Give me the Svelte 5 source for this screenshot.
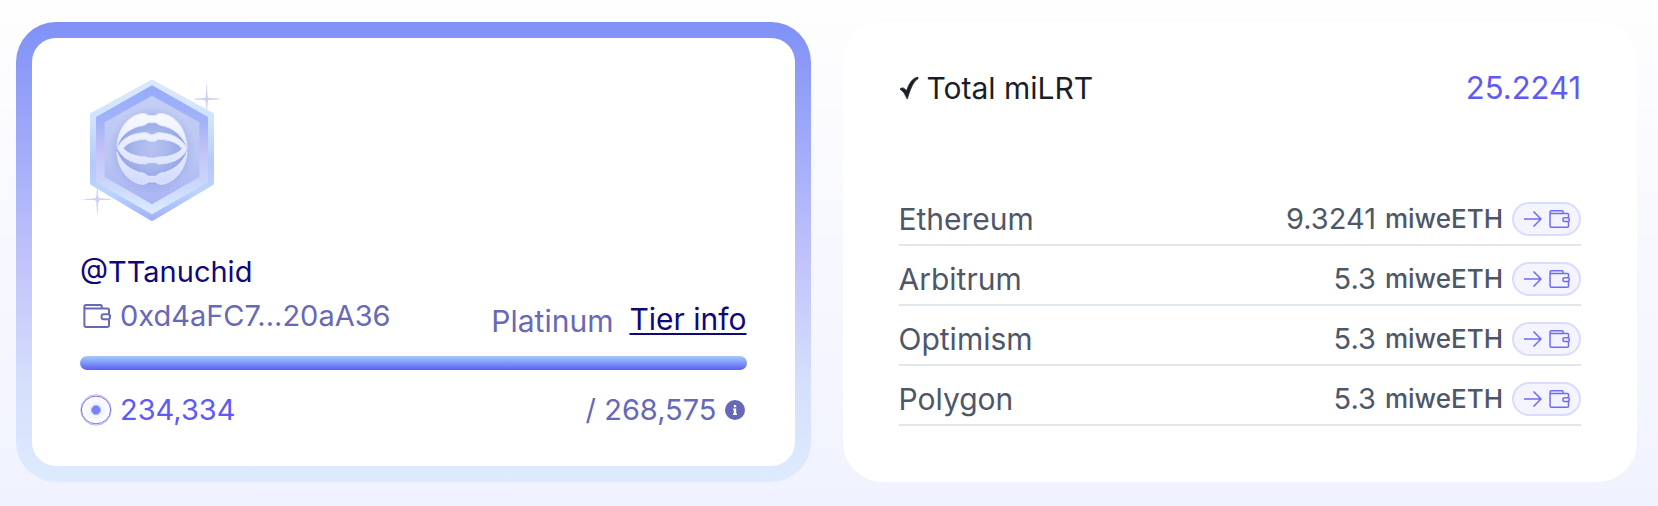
<script>
  const balances = [
    { chain: 'Ethereum', amount: '9.3241' },
    { chain: 'Arbitrum', amount: '5.3' },
    { chain: 'Optimism', amount: '5.3' },
    { chain: 'Polygon', amount: '5.3' }
  ];
</script>

{#snippet wallet(cls)}
  <svg class={cls} viewBox="0 0 28 24" fill="none" stroke="currentColor" stroke-width="2" aria-hidden="true">
    <path d="M26 10V6Q26 4.6 24.6 4.6H1.4M1.4 4.6V21Q1.4 23 3.2 23H24.6Q26 23 26 21.6V15.4" />
    <path d="M1.4 5V2.8Q1.4 1 3.2 1H17.4Q18.8 1 18.8 2.4V4.4" />
    <rect x="18.6" y="10.2" width="8.4" height="5" rx="2" />
  </svg>
{/snippet}

<main>
  <section class="tier">
    <div class="inner">
      <svg class="badge" viewBox="30 39 432 432" aria-hidden="true">
        <defs>
          <linearGradient id="rim" x1="0" y1="0" x2="0" y2="1">
            <stop offset="0" stop-color="#d9e8fd" /><stop offset=".3" stop-color="#cfe2fd" />
            <stop offset=".6" stop-color="#b3c8fb" /><stop offset=".8" stop-color="#bcd5fc" /><stop offset="1" stop-color="#a0b3f9" />
          </linearGradient>
          <linearGradient id="band" x1="0" y1="0" x2="0" y2="1">
            <stop offset="0" stop-color="#95abf9" /><stop offset=".28" stop-color="#a3b2f8" />
            <stop offset=".52" stop-color="#c4c3f8" /><stop offset=".78" stop-color="#cbd8fb" /><stop offset="1" stop-color="#dcecfd" />
          </linearGradient>
          <linearGradient id="core" x1="0" y1="0" x2="0" y2="1">
            <stop offset="0" stop-color="#c5cff5" /><stop offset=".6" stop-color="#b9c5f3" /><stop offset="1" stop-color="#a9b3f2" />
          </linearGradient>
          <linearGradient id="mark" gradientUnits="userSpaceOnUse" x1="0" y1="145" x2="0" y2="358">
            <stop offset="0" stop-color="#f8faff" /><stop offset=".5" stop-color="#e6ebfe" /><stop offset="1" stop-color="#d3dbfc" />
          </linearGradient>
          <radialGradient id="halo">
            <stop offset=".6" stop-color="#8b9be3" stop-opacity=".6" /><stop offset="1" stop-color="#8b9be3" stop-opacity="0" />
          </radialGradient>
          <radialGradient id="ball">
            <stop offset="0" stop-color="#b8c3f1" /><stop offset=".5" stop-color="#a9b6ec" /><stop offset="1" stop-color="#93a3e4" />
          </radialGradient>
        </defs>
        <g fill="#c7c7f7">
          <path d="M410 48Q411 90 414 98Q422 101 462 102Q422 103 414 106Q411 114 410 156Q409 114 406 106Q398 103 360 102Q398 101 406 98Q409 90 410 48Z" />
          <path d="M82 350Q83 391 86 399Q94 402 134 403Q94 404 86 407Q83 415 82 456Q81 415 78 407Q70 404 32 403Q70 402 78 399Q81 391 82 350Z" />
        </g>
        <g stroke="#d2d2f9" stroke-width="3" fill="none">
          <path d="M410 64V142M374 102H448M82 366V442M46 403H120" />
        </g>
        <path d="M246 52L424 150V354L246 460L68 354V150Z" fill="url(#rim)" stroke="url(#rim)" stroke-width="16" stroke-linejoin="round" />
        <path d="M246 61L414 156V352L246 448L78 352V156Z" fill="url(#band)" />
        <path d="M246 92L388 172V336L246 418L104 336V172Z" fill="url(#core)" />
        <circle cx="246" cy="255" r="132" fill="url(#halo)" />
        <circle cx="246" cy="252" r="104" fill="url(#ball)" />
        <g fill="url(#mark)" stroke="#e0e6fe" stroke-width="3" stroke-linejoin="round">
          <path d="M141 243C144 190 175 151 218 145Q229 145 235 151H257Q263 145 274 145C317 151 348 190 351 247C338 211 308 186 270 181L257 173H235L222 181C184 186 154 208 141 243Z" />
          <path fill-rule="evenodd" d="M142 248C157 220 183 205 225 203Q235 203 240 209H252Q257 203 267 203C309 205 337 222 351 252C338 280 309 295 267 297L253 292H239L225 297C183 295 155 278 142 248ZM160 250C170 264 194 275 227 276L238 279H254L265 276C302 276 325 265 336 251C325 235 302 224 265 223L254 229H238L227 223C192 224 170 235 160 250Z" />
          <path d="M141 260C153 294 184 320 222 325L235 334H257L270 325C308 320 338 295 351 260C348 311 317 352 274 358Q263 358 257 351H235Q229 358 218 358C175 352 144 313 141 260Z" />
        </g>
      </svg>

      <div class="profile">
        <div class="identity">
          <div class="handle">@TTanuchid</div>
          <div class="address">{@render wallet('wallet')}<span>0xd4aFC7...20aA36</span></div>
        </div>
        <div class="level">
          <span class="name">Platinum</span>
          <a href="#tier">Tier info</a>
        </div>
      </div>

      <div class="bar" role="progressbar" aria-label="Tier progress" aria-valuenow="234334" aria-valuemin="0" aria-valuemax="268575"></div>

      <div class="points">
        <div class="earned">
          <svg class="coin" viewBox="0 0 32 32" aria-hidden="true">
            <defs><radialGradient id="coinFill"><stop offset="0" stop-color="#e9eafe" /><stop offset="1" stop-color="#fff" /></radialGradient></defs>
            <circle cx="16" cy="16" r="15.2" fill="#fff" stroke="#b5b4fa" />
            <ellipse cx="16" cy="16" rx="14.6" ry="13.800" fill="url(#coinFill)" stroke="#7775f4" />
            <circle cx="16" cy="16" r="4.6" fill="#7d80f3" stroke="#91b8f8" />
          </svg>
          <span>234,334</span>
        </div>
        <div class="goal">
          <span>/ 268,575</span>
          <svg class="info" viewBox="0 0 20 20" aria-hidden="true">
            <circle cx="10" cy="10" r="10" fill="currentColor" />
            <path d="M8.800 5h2.400v2.200H8.800zM8 8.400h3.200v5.200h.8v1.400H8v-1.400h.8V9.800H8z" fill="#fff" />
          </svg>
        </div>
      </div>
    </div>
  </section>

  <section class="totals">
    <header>
      <h2>
        <svg class="check" viewBox="0 0 20 24" aria-hidden="true"><path d="M1 13Q4.500 10 7.400 15Q12 1.500 19 1.200V2.800Q13.500 5 8.200 23Q5 15 1 13Z" fill="currentColor" stroke="currentColor" stroke-width=".8" /></svg>
        <span>Total miLRT</span>
      </h2>
      <strong>25.2241</strong>
    </header>
    <ul>
      {#each balances as b}
        <li>
          <span class="chain">{b.chain}</span>
          <span class="amount">{b.amount}</span>
          <span class="unit">miweETH</span>
          <button type="button" aria-label="Send {b.chain} balance to wallet">
            <svg class="arrow" viewBox="0 0 18 16" fill="none" stroke="currentColor" stroke-width="1.500" aria-hidden="true"><path d="M0 8H17M9.500 .5L17 8L9.500 15.500" /></svg>
            {@render wallet('mini')}
          </button>
        </li>
      {/each}
    </ul>
  </section>
</main>

<style>
  :global(body) {
    margin: 0;
    min-height: 100vh;
    background: linear-gradient(#fefefe, #f0f2ff);
  }
  main {
    display: grid;
    grid-template-columns: 1fr 1fr;
    gap: 32px;
    padding: 22px 21px 25px 16px;
    font-family: Inter, 'Liberation Sans', sans-serif;
    font-size: 29px;
    line-height: 44px;
    color: #6868b8;
  }
  svg { display: block; flex: none; }
  .tier {
    padding: 16px;
    border-radius: 40px;
    background: linear-gradient(#7f91f7, #c3c5fa 54%, #d5e1fc 80%, #deeafd);
  }
  .inner {
    padding: 40px 48px 34px;
    border-radius: 24px;
    background: #fff;
  }
  .badge { width: 144px; height: 144px; }
  .profile {
    display: flex;
    justify-content: space-between;
    align-items: flex-end;
    margin-top: 28px;
  }
  .identity { padding-bottom: 3px; }
  .handle { color: #10087a; }
  .address, .earned, .goal, .level { display: flex; align-items: center; gap: 8px; }
  .wallet { width: 28px; height: 24px; margin: 0 1px 0 3px; }
  .level { gap: 16px; align-items: flex-end; font-size: 30px; }
  .level .name { line-height: 40px; }
  a {
    color: #10087a;
    text-decoration: underline;
    text-decoration-thickness: 2px;
    text-underline-offset: 3px;
  }
  .bar {
    height: 14px;
    margin: 15px 0 18px;
    border-radius: 7px;
    background: linear-gradient(#a3cdfb, #5b5ef0);
  }
  .points { display: flex; justify-content: space-between; }
  .earned { color: #6059f5; }
  .coin { width: 32px; height: 32px; }
  .info { width: 20px; height: 20px; margin-right: 2px; }
  .totals {
    padding: 44px 56px 56px;
    border-radius: 40px;
    background: #fff;
  }
  header { display: flex; justify-content: space-between; align-items: center; }
  h2 {
    display: flex;
    align-items: center;
    gap: 8px;
    margin: 0;
    font-size: 30px;
    font-weight: 400;
    color: #1a1e29;
  }
  .check { width: 20px; height: 24px; }
  strong { font-size: 31px; font-weight: 400; color: #6059f5; }
  ul { margin: 76px 0 0; padding: 0; list-style: none; }
  li {
    display: flex;
    align-items: center;
    height: 34px;
    padding: 16px 0 8px;
    border-bottom: 2px solid #e2e7ec;
    color: #4e5768;
  }
  .chain { flex: 1; font-size: 30px; }
  .unit { margin: 0 9px; font-size: 26px; font-weight: 500; }
  button {
    display: flex;
    align-items: center;
    justify-content: center;
    gap: 7px;
    width: 69px;
    height: 34px;
    padding: 0;
    border: 2px solid #d9dcfb;
    border-radius: 17px;
    background: #f3f4ff;
    color: #6e6cf5;
  }
  .arrow { width: 18px; height: 16px; }
  .mini { width: 21px; height: 18px; }
</style>
